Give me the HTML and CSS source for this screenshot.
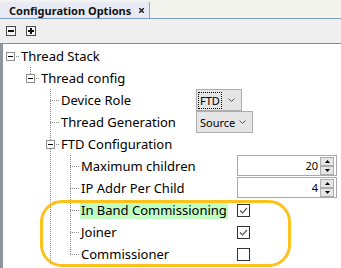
FILE: index.html
```html
<!DOCTYPE html>
<html lang="en">
<head>
    <meta charset="UTF-8">
    <meta name="viewport" content="width=device-width, initial-scale=1.0">
    <title>Configuration Options</title>
    <link rel="stylesheet" href="styles.css">
</head>
<body>
    <div class="window">
        <div class="tabbar">
            <div class="tab">
                <span class="tab-title">Configuration Options</span>
                <svg class="tab-close" width="5" height="5" viewBox="0 0 5 5"><path d="M0 0 L5 5 M5 0 L0 5"/></svg>
            </div>
        </div>

        <div class="toolbar">
            <button class="tool" title="Collapse all">
                <svg width="10" height="10" viewBox="0 0 10 10"><rect x="0.5" y="0.5" width="9" height="9"/><path d="M2 5 H8"/></svg>
            </button>
            <button class="tool" title="Expand all">
                <svg width="10" height="10" viewBox="0 0 10 10"><rect x="0.5" y="0.5" width="9" height="9"/><path d="M2 5 H8 M5 2 V8"/></svg>
            </button>
        </div>

        <div class="tree">
            <div class="row">
                <span class="g x"><svg class="box" width="9" height="9" viewBox="0 0 9 9"><rect x="0.5" y="0.5" width="8" height="8"/><path d="M2 4.5 H7"/></svg></span>
                <span class="name"><span>Thread Stack</span></span>
            </div>
            <div class="row">
                <span class="g"></span>
                <span class="g x up"><svg class="box" width="9" height="9" viewBox="0 0 9 9"><rect x="0.5" y="0.5" width="8" height="8"/><path d="M2 4.5 H7"/></svg></span>
                <span class="name"><span>Thread config</span></span>
            </div>
            <div class="row">
                <span class="g"></span><span class="g"></span><span class="g t"></span>
                <span class="name w2"><span>Device Role</span></span>
                <div class="combo ftd">
                    <span class="combo-text focus">FTD</span>
                    <svg class="chev" width="7" height="4" viewBox="0 0 7 4"><path d="M0.5 0.5 L3.5 3.5 L6.5 0.5"/></svg>
                </div>
            </div>
            <div class="row">
                <span class="g"></span><span class="g"></span><span class="g t"></span>
                <span class="name w2"><span>Thread Generation</span></span>
                <div class="combo source">
                    <span class="combo-text">Source</span>
                    <svg class="chev" width="7" height="4" viewBox="0 0 7 4"><path d="M0.5 0.5 L3.5 3.5 L6.5 0.5"/></svg>
                </div>
            </div>
            <div class="row">
                <span class="g"></span><span class="g"></span>
                <span class="g x v"><svg class="box" width="9" height="9" viewBox="0 0 9 9"><rect x="0.5" y="0.5" width="8" height="8"/><path d="M2 4.5 H7"/></svg></span>
                <span class="name"><span>FTD Configuration</span></span>
            </div>
            <div class="row">
                <span class="g"></span><span class="g"></span><span class="g v"></span><span class="g t"></span>
                <span class="name w3"><span>Maximum children</span></span>
                <div class="spin">
                    <span class="spin-val">20</span>
                    <span class="spin-btns">
                        <span class="spin-btn"><svg width="5" height="3" viewBox="0 0 5 3"><path d="M2.5 0 L5 3 L0 3 Z"/></svg></span>
                        <span class="spin-btn"><svg width="5" height="3" viewBox="0 0 5 3"><path d="M0 0 L5 0 L2.5 3 Z"/></svg></span>
                    </span>
                </div>
            </div>
            <div class="row">
                <span class="g"></span><span class="g"></span><span class="g v"></span><span class="g t"></span>
                <span class="name w3"><span>IP Addr Per Child</span></span>
                <div class="spin">
                    <span class="spin-val">4</span>
                    <span class="spin-btns">
                        <span class="spin-btn"><svg width="5" height="3" viewBox="0 0 5 3"><path d="M2.5 0 L5 3 L0 3 Z"/></svg></span>
                        <span class="spin-btn"><svg width="5" height="3" viewBox="0 0 5 3"><path d="M0 0 L5 0 L2.5 3 Z"/></svg></span>
                    </span>
                </div>
            </div>
            <div class="row">
                <span class="g"></span><span class="g"></span><span class="g v"></span><span class="g t"></span>
                <span class="name w3"><span class="changed">In Band Commissioning</span></span>
                <svg class="check" width="13" height="13" viewBox="0 0 13 13"><rect x="0.5" y="0.5" width="12" height="12"/><path d="M3 6.5 L5.5 9 L10 4"/></svg>
            </div>
            <div class="row">
                <span class="g"></span><span class="g"></span><span class="g v"></span><span class="g t"></span>
                <span class="name w3"><span>Joiner</span></span>
                <svg class="check" width="13" height="13" viewBox="0 0 13 13"><rect x="0.5" y="0.5" width="12" height="12"/><path d="M3 6.5 L5.5 9 L10 4"/></svg>
            </div>
            <div class="row">
                <span class="g"></span><span class="g"></span><span class="g v"></span><span class="g l"></span>
                <span class="name w3"><span>Commissioner</span></span>
                <svg class="check" width="13" height="13" viewBox="0 0 13 13"><rect x="0.5" y="0.5" width="12" height="12"/></svg>
            </div>
        </div>

        <!-- highlight round the commissioning options -->
        <div class="callout"></div>
    </div>
</body>
</html>
```

FILE: styles.css
```css
:root {
    --dv: repeating-linear-gradient(to bottom, #8a8a8a 0 1px, transparent 1px 2px);
    --dh: repeating-linear-gradient(to right, #8a8a8a 0 1px, transparent 1px 2px);
}

body {
    margin: 0;
    background: #fff;
    font-family: "Noto Sans", sans-serif;
    color: #000;
}

.window {
    position: relative;
    width: 341px;
    height: 268px;
    overflow: hidden;
    display: flex;
    flex-direction: column;
}

/* tab strip */
.tabbar {
    height: 18px;
    flex: none;
    background: #f4f4ee;
    border-bottom: 1px solid #7c9cc4;
    display: flex;
    align-items: flex-end;
}

.tab {
    width: 150px;
    height: 16px;
    box-sizing: border-box;
    padding: 0 5px 0 9px;
    background: #e8ebf4;
    border-right: 1px solid #9ba4b4;
    display: flex;
    align-items: center;
}

.tab-title {
    font-size: 11px;
    font-weight: bold;
    color: #111;
    white-space: nowrap;
}

.tab-close {
    margin-left: auto;
    stroke: #222;
    stroke-width: 1.5;
}

/* toolbar */
.toolbar {
    height: 25px;
    flex: none;
    box-sizing: border-box;
    padding: 7px 0 0 6px;
    background: #efefef;
    border-bottom: 1px solid #868a93;
    display: flex;
    align-items: flex-start;
    gap: 10px;
}

.tool {
    display: block;
    padding: 0;
    border: none;
    background: none;
    cursor: pointer;
}

.tool svg {
    display: block;
}

.tool rect {
    fill: #f6f6f6;
    stroke: #4a4a4a;
}

.tool path {
    stroke: #111;
    stroke-width: 2;
}

/* tree */
.tree {
    flex: 1;
    padding-top: 1px;
    background: linear-gradient(to right, #8d969f 3px, #fff 3px);
    font-size: 13px;
}

.row {
    height: 22px;
    display: flex;
    align-items: center;
}

.g {
    flex: none;
    align-self: stretch;
    width: 20px;
    box-sizing: border-box;
    background-repeat: no-repeat;
}

.g.v {
    background-image: var(--dv);
    background-size: 1px 22px;
    background-position: 10px 0;
}

.g.t {
    background-image: var(--dv), var(--dh);
    background-size: 1px 22px, 10px 1px;
    background-position: 10px 0, 10px 11px;
}

.g.l {
    background-image: var(--dv), var(--dh);
    background-size: 1px 12px, 10px 1px;
    background-position: 10px 0, 10px 11px;
}

.g.x {
    padding: 7px 0 0 6px;
    background-image: var(--dh);
    background-size: 4px 1px;
    background-position: 16px 11px;
}

.g.x.up {
    background-image: var(--dh), var(--dv);
    background-size: 4px 1px, 1px 7px;
    background-position: 16px 11px, 10px 0;
}

.g.x.v {
    background-image: var(--dh), var(--dv);
    background-size: 4px 1px, 1px 22px;
    background-position: 16px 11px, 10px 0;
}

.box {
    display: block;
}

.box rect {
    fill: #fff;
    stroke: #8e8f90;
}

.box path {
    stroke: #000;
}

.name {
    flex: none;
    white-space: nowrap;
    line-height: 18px;
}

.name span {
    display: inline-block;
    padding: 0 1px;
}

.name.w2 {
    width: 136px;
}

.name.w3 {
    width: 157px;
}

.name .changed {
    background: #c1fcc1;
}

/* combo boxes */
.combo {
    height: 22px;
    box-sizing: border-box;
    padding-left: 1px;
    border: 1px solid #adadad;
    background: #e5e5e5;
    display: flex;
    align-items: center;
    font-size: 11px;
    align-self: stretch;
}

.combo.ftd {
    width: 46px;
}

.combo.source {
    width: 57px;
}

.combo-text {
    padding: 0 1px;
    border: 1px dotted transparent;
    line-height: 15px;
}

.combo-text.focus {
    border-color: #000;
}

.chev {
    margin: 0 6px 0 auto;
    fill: none;
    stroke: #555;
}

/* spinners */
.spin {
    width: 100px;
    height: 21px;
    box-sizing: border-box;
    align-self: flex-start;
    border: 1px solid #a9a9a9;
    background: #fff;
    display: flex;
    align-items: center;
    font-size: 11px;
}

.spin-val {
    flex: 1;
    text-align: right;
    padding-right: 2px;
}

.spin-btns {
    width: 14px;
    margin-right: 2px;
    display: flex;
    flex-direction: column;
}

.spin-btn {
    height: 9px;
    box-sizing: border-box;
    border: 1px solid #adadad;
    background: #e6e6e6;
    display: flex;
    align-items: center;
    justify-content: center;
}

.spin-btn svg {
    display: block;
    fill: #000;
}

/* check boxes */
.check rect {
    fill: #fff;
    stroke: #333;
}

.check path {
    fill: none;
    stroke: #555;
    stroke-width: 1.2;
}

.callout {
    position: absolute;
    left: 40px;
    top: 200px;
    width: 251px;
    height: 67px;
    box-sizing: border-box;
    border: 3px solid #fcc21b;
    border-radius: 22px;
    pointer-events: none;
}
```
